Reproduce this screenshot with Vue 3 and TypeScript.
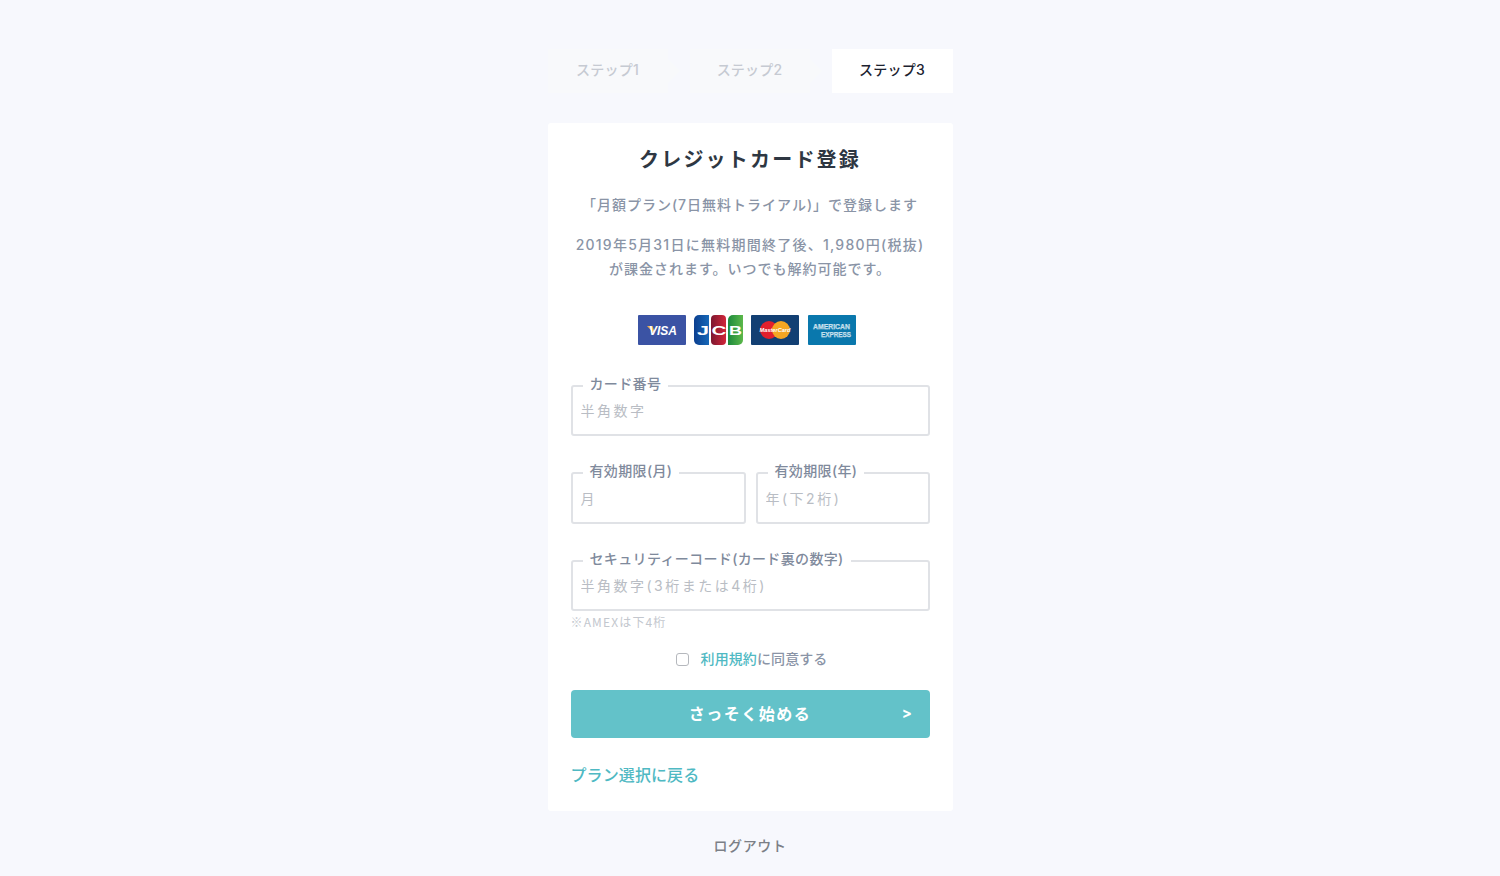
<script setup lang="ts">
const steps = [
  { label: 'ステップ1', active: false },
  { label: 'ステップ2', active: false },
  { label: 'ステップ3', active: true },
]
</script>

<template>
  <main class="page">
    <ol class="steps">
      <li v-for="s in steps" :key="s.label" class="step" :class="{ active: s.active, arrow: !s.active }">{{ s.label }}</li>
    </ol>

    <section class="card">
      <h1 class="title">クレジットカード登録</h1>
      <p class="plan">「月額プラン(7日無料トライアル)」で登録します</p>
      <p class="notice"><span class="wide">2019年5月31日に無料期間終了後、1,980円(税抜)</span><br />が課金されます。いつでも解約可能です。</p>

      <div class="brands">
        <svg class="brand" width="48" height="30" viewBox="0 0 48 30">
          <rect width="48" height="30" rx="1" fill="#3b53a4" />
          <path d="M9 11h5.5l2 5.5-1 1.5z" fill="#e9b04e" />
          <text x="11" y="20" class="visa">VISA</text>
        </svg>
        <svg class="brand" width="49" height="30" viewBox="0 0 49 30">
          <defs>
            <linearGradient id="jb" x1="0" x2="1" y1="0" y2="0"><stop offset="0" stop-color="#0c3f8f" /><stop offset="1" stop-color="#1668b8" /></linearGradient>
            <linearGradient id="jr" x1="0" x2="1" y1="0" y2="0"><stop offset="0" stop-color="#7d1830" /><stop offset="1" stop-color="#d2263a" /></linearGradient>
            <linearGradient id="jg" x1="0" x2="1" y1="0" y2="0"><stop offset="0" stop-color="#1c8a3c" /><stop offset="1" stop-color="#5cb84a" /></linearGradient>
          </defs>
          <path d="M5 0h10v30H5a5 5 0 0 1-5-5V5a5 5 0 0 1 5-5z" fill="url(#jb)" />
          <rect x="17" width="15" height="30" rx="4" fill="url(#jr)" />
          <path d="M34 5a5 5 0 0 1 5-5h10v25a5 5 0 0 1-5 5H34z" fill="url(#jg)" />
          <text x="3" y="20" textLength="12" lengthAdjust="spacingAndGlyphs" class="jcbt">J</text>
          <text x="17.5" y="20" textLength="15" lengthAdjust="spacingAndGlyphs" class="jcbt">C</text>
          <text x="35" y="20" textLength="13" lengthAdjust="spacingAndGlyphs" class="jcbt">B</text>
        </svg>
        <svg class="brand" width="48" height="30" viewBox="0 0 48 30">
          <rect width="48" height="30" rx="1" fill="#123f73" />
          <circle cx="18" cy="15" r="9" fill="#e2202c" />
          <circle cx="30" cy="15" r="9" fill="#f5a623" />
          <text x="24" y="17" class="mc">MasterCard</text>
        </svg>
        <svg class="brand last" width="48" height="30" viewBox="0 0 48 30">
          <rect width="48" height="30" rx="1" fill="#0a78ad" />
          <text x="5" y="13.5" textLength="37" lengthAdjust="spacingAndGlyphs" class="amex">AMERICAN</text>
          <text x="13" y="21.5" textLength="30" lengthAdjust="spacingAndGlyphs" class="amex">EXPRESS</text>
        </svg>
      </div>

      <form class="form" @submit.prevent>
        <fieldset class="field">
          <legend>カード番号</legend>
          <input type="text" placeholder="半角数字" />
        </fieldset>

        <div class="row">
          <fieldset class="field">
            <legend>有効期限(月)</legend>
            <input type="text" placeholder="月" />
          </fieldset>
          <fieldset class="field">
            <legend>有効期限(年)</legend>
            <input type="text" placeholder="年(下2桁)" />
          </fieldset>
        </div>

        <fieldset class="field">
          <legend>セキュリティーコード(カード裏の数字)</legend>
          <input type="text" placeholder="半角数字(3桁または4桁)" />
        </fieldset>
        <p class="hint">※AMEXは下4桁</p>

        <label class="agree">
          <span class="box"></span>
          <span><a class="link">利用規約</a>に同意する</span>
        </label>

        <button class="submit" type="submit">
          <span class="submit-label">さっそく始める</span>
          <span class="chev">&gt;</span>
        </button>
      </form>

      <a class="back">プラン選択に戻る</a>
    </section>

    <a class="logout">ログアウト</a>
  </main>
</template>

<style scoped>
.page {
  box-sizing: border-box;
  min-height: 876px;
  padding-top: 49px;
  background: #f7f8fd;
  display: flex;
  flex-direction: column;
  align-items: center;
  font-family: "Inter", "Noto Sans CJK JP", sans-serif;
  color: #8a94a6;
}
.steps {
  list-style: none;
  margin: 0 0 30px;
  padding: 0;
  width: 405px;
  height: 44px;
  display: flex;
  justify-content: space-between;
}
.step {
  position: relative;
  width: 121px;
  padding-bottom: 5px;
  box-sizing: border-box;
  display: flex;
  align-items: center;
  justify-content: center;
  font-size: 14px;
  letter-spacing: 0.2px;
  font-weight: 500;
  background: #f8f9fb;
  color: #c6cad2;
}
.step.arrow {
  width: 120px;
  margin-right: 1px;
}
.step.arrow::after {
  content: "";
  position: absolute;
  left: 100%;
  top: 10px;
  border-left: 12px solid #f8f9fb;
  border-top: 12px solid transparent;
  border-bottom: 12px solid transparent;
}
.step.active {
  background: #fff;
  color: #1c2230;
}
.card {
  box-sizing: border-box;
  width: 405px;
  height: 688px;
  padding: 0 23px;
  background: #fff;
  border-radius: 3px;
}
.title {
  margin: 22px 0 0;
  font-size: 20px;
  line-height: 30px;
  letter-spacing: 2.2px;
  font-weight: 700;
  text-align: center;
  color: #2e3742;
}
.plan,
.notice {
  margin: 0;
  font-size: 14px;
  line-height: 24px;
  letter-spacing: 1px;
  font-weight: 500;
  text-align: center;
}
.plan {
  margin-top: 18px;
}
.notice {
  margin-top: 16px;
}
.wide {
  letter-spacing: 1.25px;
}
.brands {
  margin-top: 34px;
  display: flex;
  justify-content: center;
  gap: 8px;
  padding-right: 7px;
}
.brand {
  display: block;
  font-family: "Liberation Sans", sans-serif;
}
.brand.last {
  margin-left: 1px;
}
.visa {
  font-size: 12px;
  font-weight: 700;
  font-style: italic;
  fill: #fff;
}
.jcbt {
  font-size: 12px;
  font-weight: 700;
  fill: #fff;
}
.mc {
  font-size: 5.6px;
  font-weight: 700;
  font-style: italic;
  fill: #fff;
  text-anchor: middle;
}
.amex {
  font-size: 7.2px;
  font-weight: 700;
  fill: #a9d0e3;
  stroke: #e8f3f8;
  stroke-width: 0.25;
}
.form {
  margin-top: 31px;
  display: flex;
  flex-direction: column;
}
.field {
  box-sizing: border-box;
  margin: 0;
  min-width: 0;
  padding: 0;
  height: 60px;
  border: 2px solid #e0e2e6;
  border-radius: 3px;
}
.form > .field + .row {
  margin-top: 27px;
}
.row + .field {
  margin-top: 26px;
}
.row .field {
  height: 61px;
}
.field legend {
  margin-left: 10px;
  padding: 0 7px;
  font-size: 14px;
  line-height: 20px;
  letter-spacing: 0.35px;
  font-weight: 500;
  color: #7f8a9c;
  position: relative;
  top: -2px;
}
.field input {
  display: block;
  box-sizing: border-box;
  width: 100%;
  height: 28px;
  padding: 0 8px;
  border: 0;
  outline: 0;
  background: transparent;
  font: inherit;
  font-size: 14px;
  letter-spacing: 2.5px;
  color: #333;
}
.row .field input {
  height: 30px;
}
.field input::placeholder {
  color: #b9bdc4;
  opacity: 1;
}
.row {
  display: grid;
  grid-template-columns: 175px 174px;
  justify-content: space-between;
  padding-bottom: 1px;
}
.hint {
  margin: 2px 0 0;
  font-family: "Noto Sans CJK JP", sans-serif;
  font-size: 12px;
  line-height: 18px;
  letter-spacing: 1.15px;
  color: #c3c7ce;
}
.agree {
  margin-top: 17px;
  padding-left: 3px;
  display: flex;
  justify-content: center;
  align-items: center;
  gap: 12px;
  font-size: 14px;
  line-height: 22px;
  letter-spacing: 0.1px;
  font-weight: 500;
  color: #8a94a6;
}
.box {
  box-sizing: border-box;
  width: 13px;
  height: 13px;
  border: 1px solid #b5b8bd;
  border-radius: 3px;
  background: #fff;
}
.link {
  color: #4fb9c3;
}
.submit {
  position: relative;
  margin-top: 20px;
  height: 48px;
  border: 0;
  border-radius: 4px;
  background: #63c2c9;
  color: #fff;
  font: inherit;
  font-size: 16px;
  font-weight: 700;
  letter-spacing: 1.5px;
  padding: 0 0 2px;
}
.chev {
  position: absolute;
  right: 16px;
  top: 14px;
  font-size: 15px;
  line-height: 18px;
}
.back {
  display: block;
  margin-top: 24px;
  font-size: 16px;
  line-height: 26px;
  letter-spacing: 0.1px;
  font-weight: 500;
  color: #4fb9c3;
}
.logout {
  margin-top: 24px;
  font-size: 14px;
  line-height: 22px;
  letter-spacing: 0.6px;
  font-weight: 500;
  color: #7b7f86;
}
</style>
